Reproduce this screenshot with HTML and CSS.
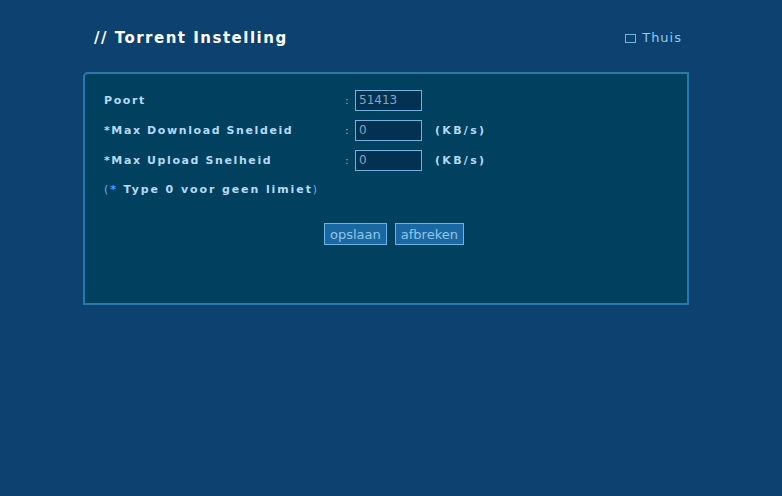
FILE: index.html
```html
<!DOCTYPE html>
<html lang="nl">
<head>
  <meta charset="UTF-8" />
  <title>Torrent Instelling</title>
  <link rel="stylesheet" href="styles.css">
</head>
<body>
  <div class="wrap">
    <div class="header">
      <h1>// Torrent Instelling</h1>
      <a href="#" class="home"><span class="home-icon"></span>Thuis</a>
    </div>

    <div class="panel">
      <form class="settings">
        <div class="row">
          <label for="port">Poort</label>
          <span class="colon">:</span>
          <input id="port" type="text" value="51413" />
          <span class="unit"></span>
        </div>
        <div class="row">
          <label for="down">*Max Download Sneldeid</label>
          <span class="colon">:</span>
          <input id="down" type="text" value="0" />
          <span class="unit">(KB/s)</span>
        </div>
        <div class="row">
          <label for="up">*Max Upload Snelheid</label>
          <span class="colon">:</span>
          <input id="up" type="text" value="0" />
          <span class="unit">(KB/s)</span>
        </div>
        <p class="note"><span class="paren">(</span><span class="star">*</span> Type 0 voor geen limiet<span class="paren">)</span></p>

        <div class="buttons">
          <button type="submit">opslaan</button>
          <button type="button">afbreken</button>
        </div>
      </form>
    </div>
  </div>
</body>
</html>
```

FILE: styles.css
```css
* {
  box-sizing: border-box;
}
body {
  margin: 0;
  background-color: #0d4270;
  font-family: "DejaVu Sans", Verdana, sans-serif;
  color: #b4dbf3;
}
.wrap {
  width: 606px;
  margin-left: 83px;
}
.header {
  display: flex;
  justify-content: space-between;
  align-items: center;
  height: 72px;
  padding: 4px 7px 0 11px;
}
h1 {
  margin: 0;
  font-size: 15px;
  letter-spacing: 1.5px;
  color: #ffffff;
  font-weight: bold;
}
.home {
  display: flex;
  align-items: center;
  font-size: 13px;
  letter-spacing: 1px;
  color: #8ccbee;
  text-decoration: none;
  margin-bottom: 2px;
}
.home-icon {
  width: 11px;
  height: 9px;
  border: 1px solid #6fb3e0;
  margin-right: 6px;
  margin-top: 2px;
}

.panel {
  background-color: #02405f;
  border: 2px solid #2b78ab;
  border-radius: 5px 0 0 0;
  height: 233px;
  padding: 11px 19px 0;
}
.row {
  display: flex;
  align-items: center;
  height: 30px;
}
label, .unit, .note {
  font-size: 11px;
  font-weight: bold;
  letter-spacing: 1.6px;
  color: #b4dbf3;
}
label {
  width: 241px;
}
.colon {
  width: 10px;
  font-size: 11px;
  color: #8cb6d4;
}
input {
  width: 67px;
  height: 21px;
  padding: 0 3px;
  border: 1px solid #6fb3e0;
  background-color: #033152;
  color: #7ea8c6;
  font-family: "DejaVu Sans", Verdana, sans-serif;
  font-size: 12px;
  outline: none;
}
.unit {
  margin-left: 13px;
  letter-spacing: 2.3px;
}
.note {
  margin: 0;
  height: 29px;
  line-height: 29px;
  letter-spacing: 1.9px;
}
.paren {
  font-weight: normal;
  color: #6fb3e0;
}
.star {
  color: #3ea2ff;
}
.buttons {
  display: flex;
  justify-content: center;
  gap: 8px;
  padding-left: 16px;
  margin-top: 19px;
}
button {
  height: 22px;
  padding: 0 5px;
  background-color: #1a68a3;
  border: 1px solid #6ab4e6;
  color: #93c6e6;
  font-family: "DejaVu Sans", Verdana, sans-serif;
  font-size: 13px;
  cursor: pointer;
}
button:hover {
  background-color: #2375b3;
}
```
